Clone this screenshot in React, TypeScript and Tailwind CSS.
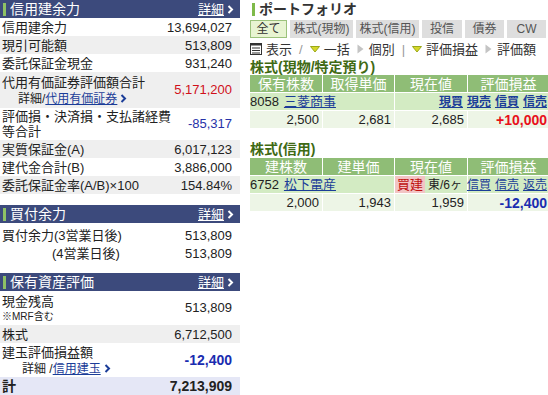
import React from "react";

const Chevron = ({ className = "" }: { className?: string }) => (
  <svg width="7" height="9" viewBox="0 0 7 9" className={`shrink-0 ${className}`}>
    <path d="M1.5 1 L5 4.5 L1.5 8" fill="none" stroke="currentColor" strokeWidth="2" />
  </svg>
);

function SectionHeader({ title }: { title: string }) {
  return (
    <div className="flex h-[18px] items-center justify-between bg-[#3c4a7c] pl-[3px] pr-[6px] text-white">
      <div className="flex items-center">
        <span className="mr-[4px] h-[13px] w-[3px] bg-[#8ec165]" />
        <span className="text-[14px] leading-none">{title}</span>
      </div>
      <a className="flex items-center text-[13px] leading-none">
        <span className="underline">詳細</span>
        <Chevron className="ml-[3px]" />
      </a>
    </div>
  );
}

function Row({
  label,
  value,
  gray,
  valueClass = "",
}: {
  label: React.ReactNode;
  value: string;
  gray?: boolean;
  valueClass?: string;
}) {
  return (
    <div
      className={`flex h-[18px] items-center justify-between pl-[2px] pr-[8px] text-[13px] leading-none ${
        gray ? "bg-[#efefef]" : "bg-white"
      }`}
    >
      <span>{label}</span>
      <span className={valueClass}>{value}</span>
    </div>
  );
}

function Tab({ label, active, w }: { label: string; active?: boolean; w: string }) {
  return (
    <div
      className={`flex h-[18px] shrink-0 items-center justify-center text-[12px] leading-none ${w} ${
        active ? "border border-[#9cc27c] bg-[#e8f4d2] text-[#333]" : "bg-[#dedede] text-[#555]"
      }`}
    >
      {label}
    </div>
  );
}

const Down = () => (
  <svg width="10" height="7" viewBox="0 0 10 7" className="mr-[4px] shrink-0">
    <path d="M0.5 0.5 H9.5 L5 6 Z" fill="#d6d82a" stroke="#9aa81a" strokeWidth="1" />
  </svg>
);

const Right = () => (
  <svg width="7" height="10" viewBox="0 0 7 10" className="mr-[5px] shrink-0">
    <path d="M0.5 0.5 L6.5 5 L0.5 9.5 Z" fill="#c4c4c4" />
  </svg>
);

const Lnk = ({ children }: { children: React.ReactNode }) => (
  <a className="text-[#1b3d98] underline">{children}</a>
);

export default function App() {
  return (
    <div className="flex h-[395px] w-[548px] overflow-hidden whitespace-nowrap bg-white font-['Liberation_Sans','Noto_Sans_CJK_JP',sans-serif] text-[#222]">
      {/* left column */}
      <div className="w-[240px] shrink-0">
        <SectionHeader title="信用建余力" />
        <Row label="信用建余力" value="13,694,027" />
        <Row label="現引可能額" value="513,809" gray />
        <Row label="委託保証金現金" value="931,240" />
        <div className="flex h-[36px] items-center justify-between bg-[#efefef] pl-[2px] pr-[8px]">
          <div className="flex flex-col">
            <span className="text-[13px] leading-[17px]">代用有価証券評価額合計</span>
            <span className="flex items-center pl-[16px] text-[12px] leading-[16px]">
              詳細/ <Lnk>代用有価証券</Lnk>
              <Chevron className="ml-[3px] text-[#1b3d98]" />
            </span>
          </div>
          <span className="text-[13px] text-[#d0101a]">5,171,200</span>
        </div>
        <div className="flex h-[32px] items-center justify-between bg-white pl-[2px] pr-[8px]">
          <span className="text-[13px] leading-[15px]">
            評価損・決済損・支払諸経費
            <br />
            等合計
          </span>
          <span className="text-[13px] text-[#2632a8]">-85,317</span>
        </div>
        <Row label="実質保証金(A)" value="6,017,123" gray />
        <Row label="建代金合計(B)" value="3,886,000" />
        <Row label="委託保証金率(A/B)×100" value="154.84%" gray />

        <div className="mt-[11px]">
          <SectionHeader title="買付余力" />
          <div className="h-[3px]" />
          <Row label="買付余力(3営業日後)" value="513,809" />
          <Row label={<span className="pl-[50px]">(4営業日後)</span>} value="513,809" />
        </div>

        <div className="mt-[11px]">
          <SectionHeader title="保有資産評価" />
          <div className="flex h-[34px] items-center justify-between bg-white pl-[2px] pr-[8px]">
            <div className="flex flex-col">
              <span className="text-[13px] leading-[17px]">現金残高</span>
              <span className="text-[10px] leading-[13px]">※MRF含む</span>
            </div>
            <span className="text-[13px]">513,809</span>
          </div>
          <Row label="株式" value="6,712,500" gray />
          <div className="flex h-[34px] items-center justify-between bg-white pl-[2px] pr-[8px]">
            <div className="flex flex-col">
              <span className="text-[13px] leading-[17px]">建玉評価損益額</span>
              <span className="flex items-center pl-[20px] text-[12px] leading-[16px]">
                詳細 / <Lnk>信用建玉</Lnk>
                <Chevron className="ml-[3px] text-[#1b3d98]" />
              </span>
            </div>
            <span className="text-[14px] font-bold text-[#1a2cb0]">-12,400</span>
          </div>
          <div className="flex h-[18px] items-center justify-between bg-[#e5e7f6] pl-[2px] pr-[8px] text-[14px] font-bold leading-none">
            <span>計</span>
            <span>7,213,909</span>
          </div>
        </div>
      </div>

      {/* right column */}
      <div className="ml-[10px] w-[296px] shrink-0">
        <div className="flex h-[18px] items-center pl-[2px]">
          <span className="mr-[4px] h-[13px] w-[3px] bg-[#7fba4a]" />
          <span className="text-[14px] font-bold leading-none text-[#333]">ポートフォリオ</span>
        </div>
        <div className="mt-[2px] flex gap-[3px]">
          <Tab label="全て" active w="w-[37px]" />
          <Tab label="株式(現物)" w="w-[63px]" />
          <Tab label="株式(信用)" w="w-[63px]" />
          <Tab label="投信" w="w-[40px]" />
          <Tab label="債券" w="w-[39px]" />
          <Tab label="CW" w="w-[39px]" />
        </div>
        <div className="mt-[2px] flex h-[18px] items-center text-[13px] leading-none text-[#333]">
          <svg width="12" height="12" viewBox="0 0 12 12" className="mr-[4px] shrink-0">
            <rect x="0.5" y="0.5" width="11" height="11" fill="#fff" stroke="#333" />
            <rect x="0.5" y="0.5" width="11" height="2" fill="#333" />
            <path d="M2 5 H10 M2 7.5 H10 M2 10 H10" stroke="#333" strokeWidth="1" />
          </svg>
          <span>表示</span>
          <span className="mx-[7px] text-[#999]">/</span>
          <Down />
          <span>一括</span>
          <span className="ml-[7px]" />
          <Right />
          <span>個別</span>
          <span className="mx-[7px] text-[#999]">|</span>
          <Down />
          <span>評価損益</span>
          <span className="ml-[7px]" />
          <Right />
          <span>評価額</span>
        </div>

        <div className="flex h-[17px] items-center text-[14px] font-bold leading-none text-[#3f6a14]">
          株式(現物/特定預り)
        </div>
        <div className="grid grid-cols-[72px_71px_72px_81px] gap-px bg-white text-[13px] leading-none">
          {["保有株数", "取得単価", "現在値", "評価損益"].map((h) => (
            <div key={h} className="flex h-[17px] items-center justify-center bg-[#8fbd76] text-[14px] text-white">
              {h}
            </div>
          ))}
          <div className="col-span-2 flex h-[17px] items-center bg-[#d3ebc3]">
            <span className="mr-[5px]">8058</span>
            <Lnk>三菱商事</Lnk>
          </div>
          <div className="col-span-2 flex h-[17px] items-center justify-end gap-[4px] bg-[#d3ebc3] pr-[2px] text-[12px] font-bold">
            <Lnk>現買</Lnk>
            <Lnk>現売</Lnk>
            <Lnk>信買</Lnk>
            <Lnk>信売</Lnk>
          </div>
          {["2,500", "2,681", "2,685"].map((v, i) => (
            <div key={i} className="flex h-[17px] items-center justify-end bg-[#edf5e6] pr-[3px]">
              {v}
            </div>
          ))}
          <div className="flex h-[17px] items-center justify-end bg-[#edf5e6] pr-[2px] text-[14px] font-bold text-[#e8101a]">
            +10,000
          </div>
        </div>

        <div className="mt-[12px] flex h-[18px] items-center text-[14px] font-bold leading-none text-[#3f6a14]">
          株式(信用)
        </div>
        <div className="grid grid-cols-[72px_71px_72px_81px] gap-px bg-white text-[13px] leading-none">
          {["建株数", "建単価", "現在値", "評価損益"].map((h) => (
            <div key={h} className="flex h-[17px] items-center justify-center bg-[#8fbd76] text-[14px] text-white">
              {h}
            </div>
          ))}
          <div className="col-span-2 flex h-[17px] items-center bg-[#d3ebc3]">
            <span className="mr-[5px]">6752</span>
            <Lnk>松下電産</Lnk>
          </div>
          <div className="flex h-[17px] items-center overflow-hidden bg-[#d3ebc3]">
            <span className="flex h-full items-center bg-[#f2c4c4] px-[2px] text-[#c01010]">買建</span>
            <span className="ml-[3px] text-[12px]">東/6ヶ</span>
          </div>
          <div className="flex h-[17px] items-center justify-end gap-[4px] bg-[#d3ebc3] pr-[2px] text-[12px]">
            <Lnk>信買</Lnk>
            <Lnk>信売</Lnk>
            <Lnk>返売</Lnk>
          </div>
          {["2,000", "1,943", "1,959"].map((v, i) => (
            <div key={i} className="flex h-[17px] items-center justify-end bg-[#edf5e6] pr-[3px]">
              {v}
            </div>
          ))}
          <div className="flex h-[17px] items-center justify-end bg-[#edf5e6] pr-[2px] text-[14px] font-bold text-[#1a2cb0]">
            -12,400
          </div>
        </div>
      </div>
    </div>
  );
}
